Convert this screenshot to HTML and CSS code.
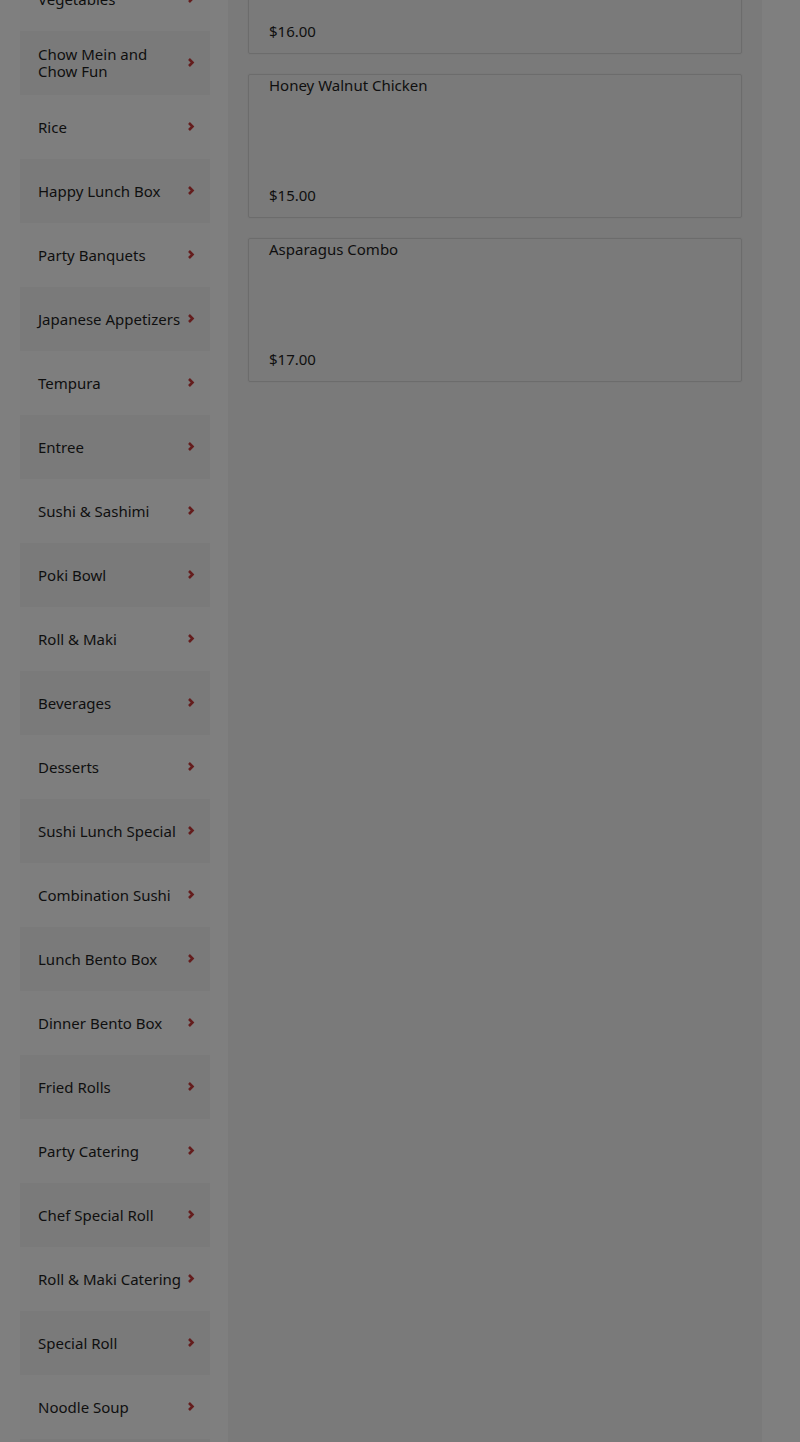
FILE: index.html
```html
<!DOCTYPE html>
<html lang="en">
<head>
    <meta charset="UTF-8">
    <meta name="viewport" content="width=device-width, initial-scale=1.0">
    <title>Menu</title>
    <link rel="stylesheet" href="styles.css">
</head>
<body>
    <div class="menu">
        <ul class="categories">
            <li><span>Vegetables</span><svg viewBox="0 0 8 10"><path d="M2 1.5 L5.5 5 L2 8.5"/></svg></li>
            <li><span>Chow Mein and Chow Fun</span><svg viewBox="0 0 8 10"><path d="M2 1.5 L5.5 5 L2 8.5"/></svg></li>
            <li><span>Rice</span><svg viewBox="0 0 8 10"><path d="M2 1.5 L5.5 5 L2 8.5"/></svg></li>
            <li><span>Happy Lunch Box</span><svg viewBox="0 0 8 10"><path d="M2 1.5 L5.5 5 L2 8.5"/></svg></li>
            <li><span>Party Banquets</span><svg viewBox="0 0 8 10"><path d="M2 1.5 L5.5 5 L2 8.5"/></svg></li>
            <li><span>Japanese Appetizers</span><svg viewBox="0 0 8 10"><path d="M2 1.5 L5.5 5 L2 8.5"/></svg></li>
            <li><span>Tempura</span><svg viewBox="0 0 8 10"><path d="M2 1.5 L5.5 5 L2 8.5"/></svg></li>
            <li><span>Entree</span><svg viewBox="0 0 8 10"><path d="M2 1.5 L5.5 5 L2 8.5"/></svg></li>
            <li><span>Sushi &amp; Sashimi</span><svg viewBox="0 0 8 10"><path d="M2 1.5 L5.5 5 L2 8.5"/></svg></li>
            <li><span>Poki Bowl</span><svg viewBox="0 0 8 10"><path d="M2 1.5 L5.5 5 L2 8.5"/></svg></li>
            <li><span>Roll &amp; Maki</span><svg viewBox="0 0 8 10"><path d="M2 1.5 L5.5 5 L2 8.5"/></svg></li>
            <li><span>Beverages</span><svg viewBox="0 0 8 10"><path d="M2 1.5 L5.5 5 L2 8.5"/></svg></li>
            <li><span>Desserts</span><svg viewBox="0 0 8 10"><path d="M2 1.5 L5.5 5 L2 8.5"/></svg></li>
            <li><span>Sushi Lunch Special</span><svg viewBox="0 0 8 10"><path d="M2 1.5 L5.5 5 L2 8.5"/></svg></li>
            <li><span>Combination Sushi</span><svg viewBox="0 0 8 10"><path d="M2 1.5 L5.5 5 L2 8.5"/></svg></li>
            <li><span>Lunch Bento Box</span><svg viewBox="0 0 8 10"><path d="M2 1.5 L5.5 5 L2 8.5"/></svg></li>
            <li><span>Dinner Bento Box</span><svg viewBox="0 0 8 10"><path d="M2 1.5 L5.5 5 L2 8.5"/></svg></li>
            <li><span>Fried Rolls</span><svg viewBox="0 0 8 10"><path d="M2 1.5 L5.5 5 L2 8.5"/></svg></li>
            <li><span>Party Catering</span><svg viewBox="0 0 8 10"><path d="M2 1.5 L5.5 5 L2 8.5"/></svg></li>
            <li><span>Chef Special Roll</span><svg viewBox="0 0 8 10"><path d="M2 1.5 L5.5 5 L2 8.5"/></svg></li>
            <li><span>Roll &amp; Maki Catering</span><svg viewBox="0 0 8 10"><path d="M2 1.5 L5.5 5 L2 8.5"/></svg></li>
            <li><span>Special Roll</span><svg viewBox="0 0 8 10"><path d="M2 1.5 L5.5 5 L2 8.5"/></svg></li>
            <li><span>Noodle Soup</span><svg viewBox="0 0 8 10"><path d="M2 1.5 L5.5 5 L2 8.5"/></svg></li>
            <li></li>
        </ul>

        <section class="items">
            <div class="item">
                <h3>General Tso's Chicken</h3>
                <p class="price">$16.00</p>
            </div>
            <div class="item">
                <h3>Honey Walnut Chicken</h3>
                <p class="price">$15.00</p>
            </div>
            <div class="item">
                <h3>Asparagus Combo</h3>
                <p class="price">$17.00</p>
            </div>
        </section>
    </div>

    <div class="overlay"></div>
</body>
</html>
```

FILE: styles.css
```css
/* Base */
html, body {
    height: 100%;
}

body {
    margin: 0;
    font-family: "Noto Sans", Arial, sans-serif;
    background: #ffffff;
    color: #1e1e1e;
    overflow: hidden;
}

/* Layout (page is scrolled down a little) */
.menu {
    display: flex;
    gap: 18px;
    padding: 0 38px 0 20px;
    margin-top: -33px;
}

/* Category list */
.categories {
    list-style: none;
    margin: 0;
    padding: 0;
    width: 190px;
    flex-shrink: 0;
}

.categories li {
    height: 64px;
    display: flex;
    align-items: center;
    justify-content: space-between;
    padding: 0 15px 0 18px;
    box-sizing: border-box;
    background: #fcfcfc;
    font-size: 15px;
    line-height: 17px;
}

.categories li:nth-child(even) {
    background: #f5f5f5;
}

.categories li span {
    padding-right: 2px;
}

.categories svg {
    width: 8px;
    height: 11px;
    flex-shrink: 0;
    margin-top: -2px;
}

.categories svg path {
    fill: none;
    stroke: #c93a3a;
    stroke-width: 2.6;
}

/* Items panel */
.items {
    flex: 1;
    background: #f4f4f4;
    padding: 0 20px;
    display: flex;
    flex-direction: column;
    gap: 20px;
    height: 1475px;
}

.item:first-child {
    margin-top: -57px;
}

.item {
    height: 144px;
    box-sizing: border-box;
    border: 1px solid #d8d8d8;
    border-radius: 2px;
    box-shadow: 0 0 2px rgba(0, 0, 0, 0.06);
    padding: 2px 20px 13px;
    display: flex;
    flex-direction: column;
    justify-content: space-between;
}

.item h3 {
    margin: 0;
    font-size: 15px;
    font-weight: normal;
    line-height: 17px;
}

.price {
    margin: 0;
    font-size: 15px;
    line-height: 17px;
}

/* Dark modal backdrop */
.overlay {
    position: fixed;
    inset: 0;
    background: rgba(0, 0, 0, 0.5);
}
```
